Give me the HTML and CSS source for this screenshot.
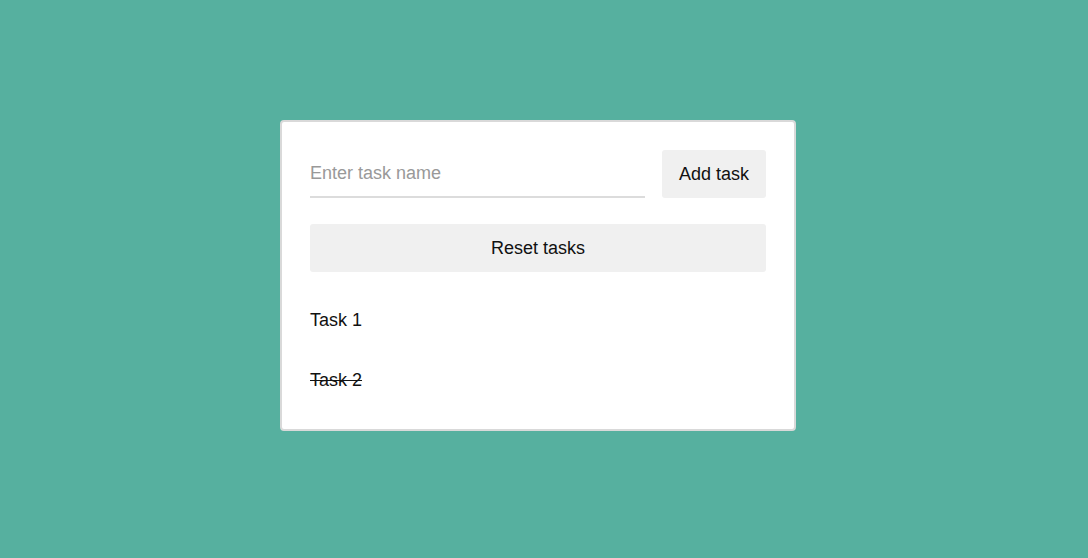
FILE: index.html
```html
<!DOCTYPE html>
<html>
<head>
<meta charset="utf-8">
<link rel="stylesheet" href="styles.css">
</head>
<body>
<div class="card">
  <div class="add-row">
    <input class="task-input" type="text" placeholder="Enter task name">
    <button class="btn add-btn">Add task</button>
  </div>
  <button class="btn reset-btn">Reset tasks</button>
  <ul class="tasks">
    <li class="task">Task 1</li>
    <li class="task done">Task 2</li>
  </ul>
</div>
</body>
</html>
```
FILE: styles.css
```css
html, body {
  margin: 0;
  height: 100%;
}
body {
  background: #56b09f;
  display: flex;
  justify-content: center;
  align-items: flex-start;
  padding: 120px 12px 0 0;
  box-sizing: border-box;
  font-family: "Liberation Sans", Arial, sans-serif;
  font-size: 18px;
  color: #111;
}
.card {
  width: 516px;
  box-sizing: border-box;
  background: #fff;
  border: 2px solid #d9d9d9;
  border-radius: 4px;
  padding: 28px 28px 19px;
  display: flex;
  flex-direction: column;
}
.add-row {
  display: flex;
  gap: 17px;
  height: 48px;
}
.task-input {
  flex: 1;
  min-width: 0;
  border: none;
  border-bottom: 2px solid #dcdcdc;
  outline: none;
  padding: 0;
  font-family: inherit;
  font-size: 18px;
  color: #111;
  background: transparent;
}
.task-input::placeholder {
  color: #999;
}
.btn {
  border: none;
  background: #f0f0f0;
  border-radius: 3px;
  font-family: inherit;
  font-size: 18px;
  color: #111;
  height: 48px;
  padding: 0 17px;
  cursor: pointer;
}
.reset-btn {
  margin-top: 26px;
  width: 100%;
}
.tasks {
  list-style: none;
  margin: 18px 0 0;
  padding: 0;
}
.task {
  height: 60px;
  line-height: 60px;
}
.done {
  text-decoration: line-through;
}
```
